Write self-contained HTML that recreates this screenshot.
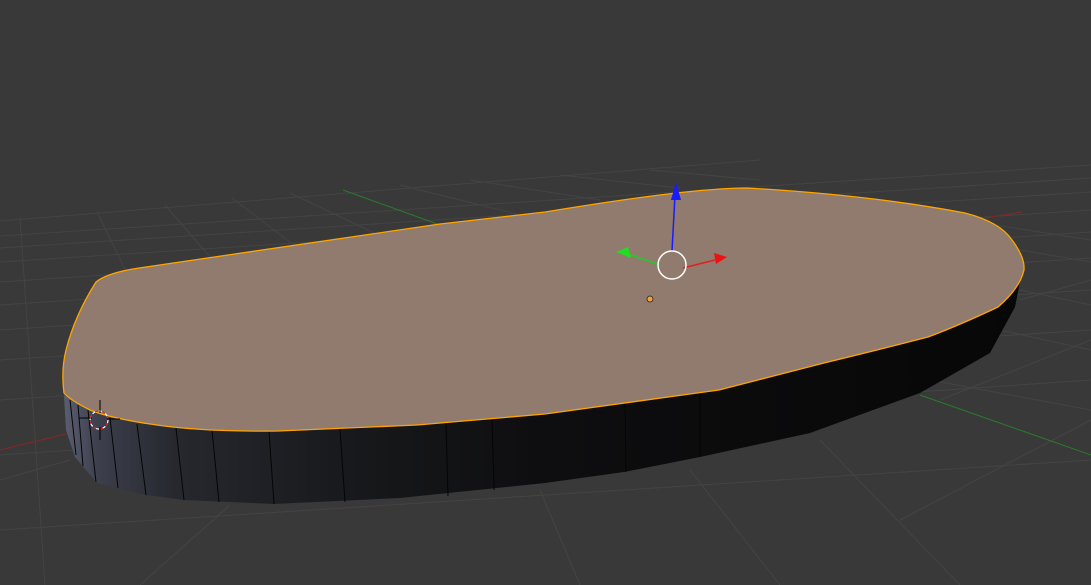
<!DOCTYPE html>
<html><head><meta charset="utf-8"><style>
html,body{margin:0;padding:0;background:#393939;width:1091px;height:585px;overflow:hidden}
svg{display:block}
</style></head><body>
<svg width="1091" height="585" viewBox="0 0 1091 585" xmlns="http://www.w3.org/2000/svg">
<defs>
<linearGradient id="side" x1="60" y1="0" x2="1020" y2="0" gradientUnits="userSpaceOnUse">
<stop offset="0" stop-color="#5d6276"/>
<stop offset="0.04" stop-color="#3c3f4c"/>
<stop offset="0.12" stop-color="#26282e"/>
<stop offset="0.3" stop-color="#18191c"/>
<stop offset="0.5" stop-color="#0e0e10"/>
<stop offset="1" stop-color="#070707"/>
</linearGradient>
</defs>
<rect width="1091" height="585" fill="#393939"/>
<g stroke="#444444" stroke-width="1" fill="none">
<line x1="0" y1="221" x2="760" y2="160"/>
<line x1="0" y1="236" x2="1091" y2="165"/>
<line x1="0" y1="248" x2="1091" y2="178"/>
<line x1="0" y1="262" x2="1091" y2="192"/>
<line x1="0" y1="282" x2="1091" y2="210"/>
<line x1="0" y1="305" x2="1091" y2="232"/>
<line x1="0" y1="330" x2="1091" y2="258"/>
<line x1="0" y1="360" x2="1091" y2="290"/>
<line x1="0" y1="400" x2="1091" y2="330"/>
<line x1="0" y1="455" x2="1091" y2="380"/>
<line x1="0" y1="530" x2="1091" y2="460"/>
<line x1="20" y1="218" x2="45" y2="585"/>
<line x1="97" y1="212" x2="135" y2="290"/>
<line x1="165" y1="205" x2="230" y2="280"/>
<line x1="232" y1="198" x2="320" y2="265"/>
<line x1="290" y1="193" x2="410" y2="250"/>
<line x1="400" y1="185" x2="520" y2="215"/>
<line x1="470" y1="180" x2="600" y2="200"/>
<line x1="560" y1="175" x2="680" y2="188"/>
<line x1="650" y1="170" x2="760" y2="180"/>
<line x1="900" y1="210" x2="1091" y2="240"/>
<line x1="1020" y1="250" x2="1091" y2="262"/>
<line x1="1020" y1="290" x2="1091" y2="305"/>
<line x1="1000" y1="330" x2="1091" y2="350"/>
<line x1="930" y1="380" x2="1091" y2="410"/>
<line x1="1091" y1="280" x2="1020" y2="300"/>
<line x1="1091" y1="340" x2="940" y2="400"/>
<line x1="1091" y1="420" x2="900" y2="520"/>
<line x1="820" y1="440" x2="960" y2="585"/>
<line x1="690" y1="470" x2="780" y2="585"/>
<line x1="540" y1="490" x2="580" y2="585"/>
<line x1="230" y1="505" x2="140" y2="585"/>
<line x1="0" y1="480" x2="70" y2="460"/>
</g>
<line x1="0" y1="450" x2="66" y2="434" stroke="#8a2525" stroke-width="1"/>
<line x1="985" y1="218" x2="1022" y2="212" stroke="#8a2525" stroke-width="1"/>
<line x1="343" y1="190" x2="440" y2="225" stroke="#2a7a2a" stroke-width="1"/>
<line x1="920" y1="395" x2="1091" y2="455" stroke="#2a7a2a" stroke-width="1"/>
<path d="M64,395 L66,430 L75,457 L97,483 L146,495 L184,500 L274,504 L400,498 L545,483 L624,472 L700,457 L810,433 L920,393 L990,353 L1015,307 L1021,277 L998,307 L928,337 L824,363 L719,390 L545,414 L417,425 L278,431 L174,428 L94,413 Z" fill="url(#side)"/>
<g stroke="#050505" stroke-width="1">
<line x1="70" y1="400" x2="76" y2="455"/>
<line x1="78" y1="405" x2="83" y2="466"/>
<line x1="88" y1="410" x2="96" y2="482"/>
<line x1="110" y1="418" x2="118" y2="488"/>
<line x1="137" y1="424" x2="146" y2="495"/>
<line x1="176" y1="428" x2="184" y2="500"/>
<line x1="212" y1="430" x2="219" y2="502"/>
<line x1="269" y1="431" x2="274" y2="504"/>
<line x1="340" y1="429" x2="345" y2="502"/>
<line x1="446" y1="423" x2="448" y2="496"/>
<line x1="492" y1="419" x2="494" y2="490"/>
<line x1="625" y1="402" x2="626" y2="472"/>
<line x1="700" y1="392" x2="700" y2="457"/>
</g>
<path d="M96,282 Q108,272 146,267 L440,224 L545,212 Q690,188 747,188 Q870,195 965,213 Q1000,222 1012,240 Q1025,257 1024,270 Q1020,288 998,307 Q960,325 928,337 Q870,352 824,363 L719,390 L545,414 L417,425 L278,431 Q200,432 150,424 Q110,418 90,410 Q70,400 64,393 Q61,370 66,350 Q75,315 96,282 Z" fill="#917b6e" stroke="#ffa500" stroke-width="1.3" stroke-linejoin="round"/>
<line x1="672" y1="251" x2="675" y2="195" stroke="#1a1aff" stroke-width="1.5"/>
<polygon points="676,182 671,200 681,200" fill="#1a1aff"/>
<line x1="660" y1="265" x2="628" y2="254" stroke="#22cc22" stroke-width="1.5"/>
<polygon points="616,252 628,247 631,258" fill="#22dd22"/>
<line x1="683" y1="268" x2="715" y2="260" stroke="#e02020" stroke-width="1.5"/>
<polygon points="727,257 714,253 716,264" fill="#ee1111"/>
<circle cx="672" cy="265" r="14" fill="none" stroke="#fff" stroke-width="1.5"/>
<circle cx="650" cy="299" r="3" fill="#f0a040" stroke="#222" stroke-width="0.8"/>
<circle cx="99" cy="420" r="9" fill="none" stroke="#fff" stroke-width="1.2" stroke-dasharray="4 3"/>
<circle cx="99" cy="420" r="9" fill="none" stroke="#e02020" stroke-width="1.2" stroke-dasharray="3 4" stroke-dashoffset="4"/>
<g stroke="#000" stroke-width="1">
<line x1="100" y1="400" x2="100" y2="413"/>
<line x1="100" y1="427" x2="100" y2="440"/>
<line x1="79" y1="418" x2="92" y2="418"/>
<line x1="107" y1="419" x2="120" y2="419"/>
</g>
</svg>
</body></html>
